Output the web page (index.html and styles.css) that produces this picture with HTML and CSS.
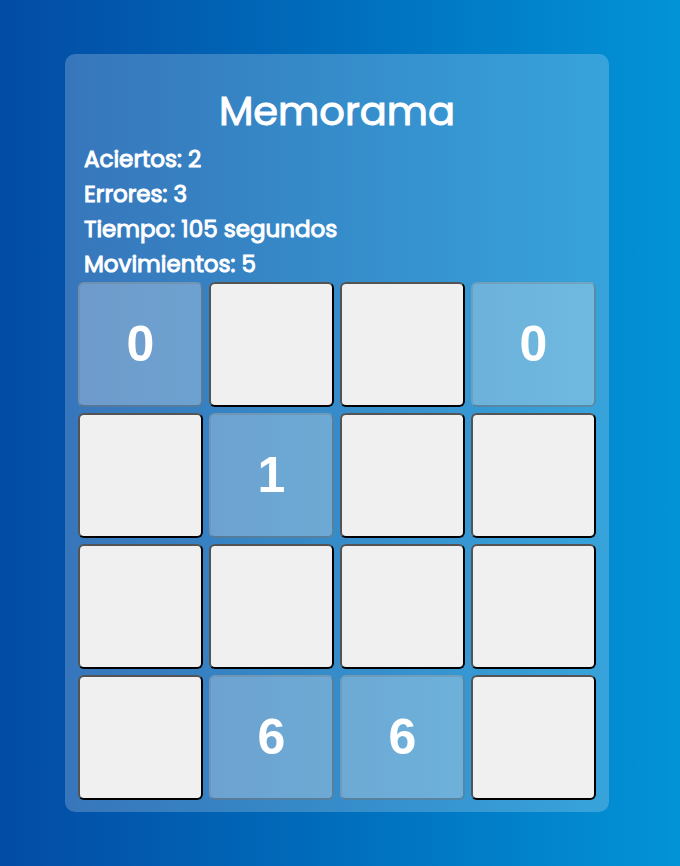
FILE: index.html
```html
<!DOCTYPE html>
<html lang="es">
<head>
<meta charset="utf-8">
<meta name="viewport" content="width=device-width, initial-scale=1">
<title>Memorama</title>
<link rel="stylesheet" href="styles.css">
</head>
<body>
<main class="game">
  <h1>Memorama</h1>
  <section class="stats">
    <h2>Aciertos: 2</h2>
    <h2>Errores: 3</h2>
    <h2>Tiempo: 105 segundos</h2>
    <h2>Movimientos: 5</h2>
  </section>
  <section class="board">
    <button disabled>0</button>
    <button aria-label="Carta 2"></button>
    <button aria-label="Carta 3"></button>
    <button disabled>0</button>
    <button aria-label="Carta 5"></button>
    <button disabled>1</button>
    <button aria-label="Carta 7"></button>
    <button aria-label="Carta 8"></button>
    <button aria-label="Carta 9"></button>
    <button aria-label="Carta 10"></button>
    <button aria-label="Carta 11"></button>
    <button aria-label="Carta 12"></button>
    <button aria-label="Carta 13"></button>
    <button disabled>6</button>
    <button disabled>6</button>
    <button aria-label="Carta 16"></button>
  </section>
</main>
</body>
</html>
```
FILE: styles.css
```css
* {
  box-sizing: border-box;
}

body {
  margin: 0;
  min-height: 100vh;
  padding: 54px 71px 54px 65px;
  background: linear-gradient(to right, #034ba5, #006ebc, #0393d7);
  color: #fff;
  font-family: Poppins, "Open Sans", sans-serif;
}

.game {
  padding: 26px 13px 12px;
  border-radius: 10px;
  background: rgba(255, 255, 255, 0.21);
}

h1,
h2 {
  margin: 0;
  font-weight: 400;
  -webkit-text-stroke: 1px #fff;
}

h1 {
  font-size: 40px;
  line-height: 62px;
  text-align: center;
}

h2 {
  font-size: 23px;
  line-height: 35px;
}

.stats {
  padding: 0 6px;
}

.board {
  display: grid;
  grid-template-columns: repeat(4, 1fr);
  gap: 6px;
}

.board button {
  aspect-ratio: 1;
  padding: 0 0 2px;
  border: 2px outset #000;
  border-radius: 6px;
  background: #f0f0f0;
  font: bold 50px "Liberation Sans", sans-serif;
}

.board button:disabled {
  border-color: rgba(118, 118, 118, 0.3);
  background: rgba(239, 239, 239, 0.3);
  color: #fff;
}
```
